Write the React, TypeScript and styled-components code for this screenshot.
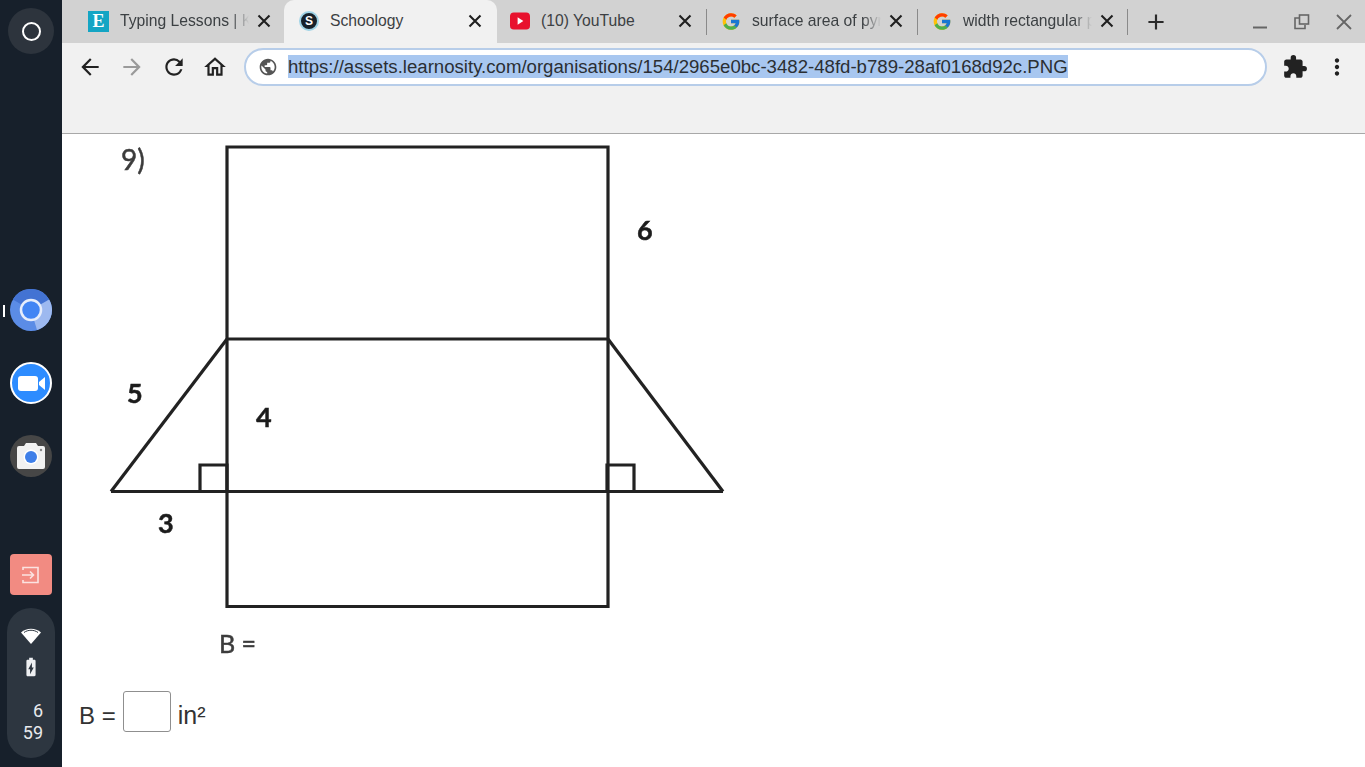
import React from 'react';
import styled, { createGlobalStyle } from 'styled-components';
import { FcGoogle } from 'react-icons/fc';
import {
  MdAdd,
  MdArrowBack,
  MdArrowForward,
  MdBatteryChargingFull,
  MdExtension,
  MdMoreVert,
  MdOutlineHome,
  MdPublic,
  MdRefresh,
} from 'react-icons/md';

const GlobalStyle = createGlobalStyle`
  html, body {
    margin: 0;
    height: 100%;
    overflow: hidden;
    background: #fff;
    font-family: "Liberation Sans", Arial, sans-serif;
  }
`;

const Screen = styled.div`
  display: flex;
  width: 1365px;
  height: 767px;
  overflow: hidden;
`;

const Shelf = styled.aside`
  width: 62px;
  flex: none;
  background: #17202b;
  display: flex;
  flex-direction: column;
  align-items: center;
  padding: 8px 0 9px;
  box-sizing: border-box;
`;

const Launcher = styled.div`
  width: 46px;
  height: 46px;
  border-radius: 50%;
  background: #2d343d;
  display: flex;
  align-items: center;
  justify-content: center;

  &::after {
    content: '';
    width: 15px;
    height: 15px;
    border: 2px solid #fff;
    border-radius: 50%;
  }
`;

const AppList = styled.div`
  margin-top: 235px;
  display: flex;
  flex-direction: column;
  gap: 31px;
`;

const AppIcon = styled.div<{ $active?: boolean }>`
  position: relative;
  width: 42px;
  height: 42px;

  svg {
    display: block;
  }

  ${(p) =>
    p.$active &&
    `&::before {
      content: '';
      position: absolute;
      left: -7px;
      top: 16px;
      width: 2px;
      height: 12px;
      background: #fff;
    }`}
`;

const ExitButton = styled.div`
  margin-top: auto;
  width: 42px;
  height: 41px;
  border-radius: 4px;
  background: #f28b82;
  display: flex;
  align-items: center;
  justify-content: center;
`;

const StatusPod = styled.div`
  margin-top: 13px;
  width: 48px;
  height: 150px;
  border-radius: 24px;
  background: #2d3640;
  display: flex;
  flex-direction: column;
  align-items: center;
  padding-top: 20px;
  box-sizing: border-box;
`;

const BatteryIcon = styled(MdBatteryChargingFull)`
  margin-top: 12px;
  color: #eef0f2;
`;

const Clock = styled.div`
  margin-top: 22px;
  width: 100%;
  padding-right: 12px;
  box-sizing: border-box;
  text-align: right;
  color: #e8eaed;
  font-family: Roboto, sans-serif;
  font-size: 18px;
  line-height: 22px;
`;

const Main = styled.main`
  flex: 1;
  min-width: 0;
  display: flex;
  flex-direction: column;
`;

const TabStrip = styled.div`
  height: 43px;
  flex: none;
  background: #d2d2d2;
  display: flex;
  align-items: stretch;
  padding-left: 11px;
`;

const Tab = styled.div<{ $active?: boolean; $width: number; $lead: number; $trail: number; $divider?: boolean }>`
  width: ${(p) => p.$width}px;
  flex: none;
  box-sizing: border-box;
  padding: 0 ${(p) => p.$trail}px 1px ${(p) => p.$lead}px;
  display: flex;
  align-items: center;
  position: relative;
  background: ${(p) => (p.$active ? '#f1f1f1' : 'transparent')};
  border-radius: ${(p) => (p.$active ? '10px 10px 0 0' : '0')};
  color: #3c4043;

  ${(p) =>
    p.$divider &&
    `&::after {
      content: '';
      position: absolute;
      right: 0;
      top: 9px;
      height: 26px;
      width: 1px;
      background: #8a8a8a;
    }`}
`;

const Favicon = styled.span`
  width: 20px;
  height: 20px;
  flex: none;
  display: flex;
  align-items: center;
  justify-content: center;
`;

const TypingFavicon = styled(Favicon)`
  background: #14a5c4;
  color: #fff;
  font-family: "Liberation Serif", serif;
  font-weight: 700;
  font-size: 18px;
  width: 21px;
  height: 21px;
`;

const SchoologyFavicon = styled(Favicon)`
  border-radius: 50%;
  background: #17212b;
  border: 2px solid #9fd3e6;
  box-sizing: border-box;
  color: #fff;
  font-weight: 700;
  font-size: 12px;
`;

const TabTitle = styled.span<{ $fade?: boolean }>`
  margin-left: 11px;
  flex: 1;
  min-width: 0;
  white-space: nowrap;
  overflow: hidden;
  font-size: 15.7px;
  ${(p) =>
    p.$fade &&
    `mask-image: linear-gradient(to right, #000 calc(100% - 24px), transparent calc(100% - 6px));`}
`;

const NewTab = styled.div`
  margin-left: 15px;
  width: 26px;
  display: flex;
  align-items: center;
  justify-content: center;
  color: #2a2a2a;
`;

const WindowControls = styled.div`
  margin-left: auto;
  display: flex;
  align-items: center;
  gap: 26px;
  padding-right: 13px;
`;

const Toolbar = styled.div`
  height: 47px;
  flex: none;
  background: #f1f1f1;
  display: flex;
  align-items: center;
  padding-left: 16px;
  color: #222;
`;

const ToolButton = styled.div<{ $gap?: number; $lead?: number; $muted?: boolean }>`
  width: 24px;
  height: 24px;
  flex: none;
  margin-left: ${(p) => p.$lead ?? 0}px;
  margin-right: ${(p) => p.$gap ?? 18}px;
  color: ${(p) => (p.$muted ? '#9a9a9a' : '#222')};

  svg {
    display: block;
    margin: -1px;
  }
`;

const Omnibox = styled.div`
  margin-left: 5px;
  width: 1023px;
  height: 38px;
  box-sizing: border-box;
  flex: none;
  background: #fff;
  border: 2px solid #b7cde9;
  border-radius: 19px;
  display: flex;
  align-items: center;
  padding-left: 12px;
`;

const Url = styled.span`
  margin-left: 10px;
  height: 23px;
  line-height: 23px;
  background: #a8c7f0;
  color: #2b2f33;
  font-size: 18.62px;
  white-space: nowrap;
`;

const Bookmarks = styled.div`
  height: 43px;
  flex: none;
  background: #f1f1f1;
  border-bottom: 1px solid #a8a8a8;
`;

const Content = styled.div`
  flex: 1;
  background: #fff;
  padding-left: 17px;
`;

const Diagram = styled.svg`
  display: block;
  margin-left: 21px;
  filter: blur(0.7px);
`;

const AnswerRow = styled.div`
  margin-top: 27px;
  display: flex;
  align-items: center;
  color: #333;
  gap: 7px;
`;

const AnswerText = styled.span<{ $size?: number }>`
  padding-top: 8px;
  font-size: ${(p) => p.$size ?? 24}px;
`;

const AnswerInput = styled.input`
  width: 48px;
  height: 41px;
  box-sizing: border-box;
  border: 1px solid #8f8f8f;
  border-radius: 3px;
  background: #fff;
  outline: none;
`;

const NumberLabel = styled.text`
  font-family: Lato, "Open Sans", sans-serif;
  font-size: 27px;
  font-weight: 700;
  fill: #1c1c1c;
  stroke: #1c1c1c;
  stroke-width: 0.5px;
`;

const PlainLabel = styled.text<{ $size: number }>`
  font-family: Lato, "Open Sans", sans-serif;
  font-size: ${(p) => p.$size}px;
  fill: #3c3c3c;
  stroke: #3c3c3c;
  stroke-width: 0.5px;
`;

const ChromeIcon = () => (
  <svg width="42" height="42" viewBox="0 0 42 42">
    <circle cx="21" cy="21" r="21" fill="#5b8ce6" />
    <path d="M21 21L2.800 10.500A21 21 0 0 1 39.200 10.500Z" fill="#4373d3" />
    <path d="M21 21L39.200 10.500A21 21 0 0 1 27 41.100Z" fill="#9db9f0" />
    <circle cx="21" cy="21" r="10" fill="#4285f4" stroke="#e6edfb" strokeWidth="2.500" />
  </svg>
);

const ZoomIcon = () => (
  <svg width="42" height="42" viewBox="0 0 42 42">
    <circle cx="21" cy="21" r="20" fill="#2d8cff" stroke="#fff" strokeWidth="2" />
    <rect x="8" y="14" width="20" height="15" rx="3" fill="#fff" />
    <path d="M29 20l6-5v13l-6-5z" fill="#fff" />
  </svg>
);

const CameraIcon = () => (
  <svg width="42" height="42" viewBox="0 0 42 42">
    <circle cx="21" cy="21" r="21" fill="#464646" />
    <path d="M16 8h10l2 3h5a2 2 0 0 1 2 2v19a2 2 0 0 1-2 2H9a2 2 0 0 1-2-2V13a2 2 0 0 1 2-2h5z" fill="#f1f1f1" />
    <circle cx="21" cy="22" r="7.500" fill="#fff" />
    <circle cx="21" cy="22" r="6" fill="#3f7fe8" />
    <circle cx="31" cy="15" r="1.200" fill="#888" />
  </svg>
);

const ExitIcon = () => (
  <svg width="18" height="18" viewBox="0 0 18 18" fill="none" stroke="#fbe3e1" strokeWidth="1.6">
    <path d="M1 4V1.500h15v15H1V14" />
    <path d="M0 9h11M8 5.500L11.500 9 8 12.500" />
  </svg>
);

const WifiIcon = () => (
  <svg width="20" height="16" viewBox="0 0 20 16">
    <path d="M10 16L0 4.500C5.500-.5 14.500-.5 20 4.500z" fill="#fff" />
    <path d="M3 4.500C7 1.500 13 1.500 17 4.500" fill="none" stroke="#2d3640" strokeWidth="1" />
  </svg>
);

const YoutubeIcon = () => (
  <svg width="21" height="18" viewBox="0 0 21 18">
    <rect width="21" height="18" rx="4" fill="#e8112d" />
    <path d="M8 5l6 4-6 4z" fill="#fff" />
  </svg>
);

const TabCloseIcon = () => (
  <svg width="18" height="18" viewBox="0 0 18 18" stroke="#1f1f1f" strokeWidth="2.100" style={{ flex: 'none' }}>
    <path d="M3.500 3.500l11 11M14.500 3.500l-11 11" />
  </svg>
);

const MinimizeIcon = () => (
  <svg width="16" height="16" viewBox="0 0 16 16">
    <path d="M1 13.500h14" stroke="#666" strokeWidth="2" />
  </svg>
);

const RestoreIcon = () => (
  <svg width="16" height="16" viewBox="0 0 16 16" fill="none" stroke="#666" strokeWidth="1.600">
    <path d="M5 4H1v10.500h10V11" />
    <rect x="5.500" y="1" width="9" height="9" />
  </svg>
);

const CloseIcon = () => (
  <svg width="16" height="16" viewBox="0 0 16 16" stroke="#666" strokeWidth="1.800">
    <path d="M1 1l14 14M15 1L1 15" />
  </svg>
);

const lines = [
  'M227 147H608V606.500H227Z',
  'M227 339H608',
  'M111 491.500H723',
  'M227 339L111 491.500',
  'M608 339L723 491.500',
  'M227 491V465H200V491',
  'M607 491V465H634V491',
];

const tabs = [
  { title: 'Typing Lessons | Keyboarding', width: 211, lead: 15, trail: 11, fade: true, icon: <TypingFavicon>E</TypingFavicon> },
  { title: 'Schoology', width: 213, lead: 15, trail: 13, active: true, icon: <SchoologyFavicon>S</SchoologyFavicon> },
  { title: '(10) YouTube', width: 210, lead: 13, trail: 13, divider: true, icon: <Favicon><YoutubeIcon /></Favicon> },
  { title: 'surface area of pyramid', width: 211, lead: 14, trail: 13, divider: true, fade: true, icon: <Favicon><FcGoogle size={21} /></Favicon> },
  { title: 'width rectangular prism', width: 210, lead: 14, trail: 12, divider: true, fade: true, icon: <Favicon><FcGoogle size={21} /></Favicon> },
];

export default function App() {
  return (
    <Screen>
      <GlobalStyle />
      <Shelf>
        <Launcher />
        <AppList>
          <AppIcon $active><ChromeIcon /></AppIcon>
          <AppIcon><ZoomIcon /></AppIcon>
          <AppIcon><CameraIcon /></AppIcon>
        </AppList>
        <ExitButton><ExitIcon /></ExitButton>
        <StatusPod>
          <WifiIcon />
          <BatteryIcon size={22} />
          <Clock>6<br />59</Clock>
        </StatusPod>
      </Shelf>
      <Main>
        <TabStrip>
          {tabs.map((t) => (
            <Tab key={t.title} $width={t.width} $lead={t.lead} $trail={t.trail} $active={t.active} $divider={t.divider}>
              {t.icon}
              <TabTitle $fade={t.fade}>{t.title}</TabTitle>
              <TabCloseIcon />
            </Tab>
          ))}
          <NewTab><MdAdd size={26} /></NewTab>
          <WindowControls>
            <MinimizeIcon />
            <RestoreIcon />
            <CloseIcon />
          </WindowControls>
        </TabStrip>
        <Toolbar>
          <ToolButton><MdArrowBack size={26} /></ToolButton>
          <ToolButton $muted><MdArrowForward size={26} /></ToolButton>
          <ToolButton $gap={17}><MdRefresh size={26} /></ToolButton>
          <ToolButton $gap={12}><MdOutlineHome size={26} /></ToolButton>
          <Omnibox>
            <MdPublic size={20} color="#555" />
            <Url>https://assets.learnosity.com/organisations/154/2965e0bc-3482-48fd-b789-28af0168d92c.PNG</Url>
          </Omnibox>
          <ToolButton $lead={16}><MdExtension size={26} /></ToolButton>
          <ToolButton><MdMoreVert size={26} /></ToolButton>
        </Toolbar>
        <Bookmarks />
        <Content>
          <Diagram width="640" height="530" viewBox="100 134 640 530">
            <g fill="none" stroke="#222" strokeWidth="3.200">
              {lines.map((d) => <path key={d} d={d} />)}
            </g>
            <PlainLabel $size={28} x="121" y="170">9)</PlainLabel>
            <NumberLabel x="637" y="240">6</NumberLabel>
            <NumberLabel x="127" y="403">5</NumberLabel>
            <NumberLabel x="256" y="427">4</NumberLabel>
            <NumberLabel x="158" y="533">3</NumberLabel>
            <PlainLabel $size={25} x="219" y="653">B =</PlainLabel>
          </Diagram>
          <AnswerRow>
            <AnswerText>B =</AnswerText>
            <AnswerInput aria-label="B" />
            <AnswerText $size={25}>in²</AnswerText>
          </AnswerRow>
        </Content>
      </Main>
    </Screen>
  );
}
